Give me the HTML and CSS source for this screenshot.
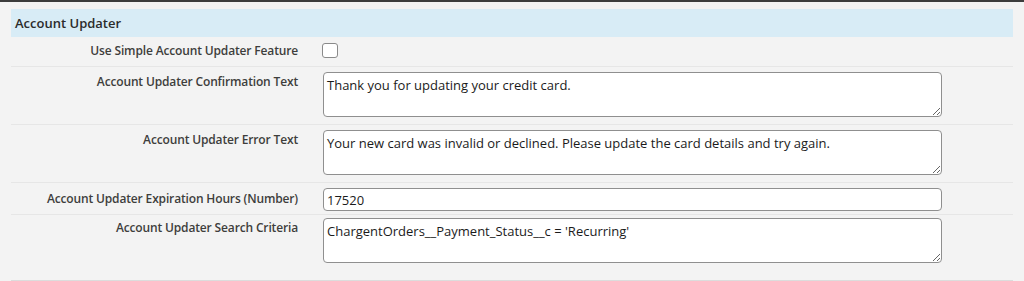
FILE: index.html
```html
<!DOCTYPE html>
<html lang="en">
<head>
  <meta charset="UTF-8" />
  <meta name="viewport" content="width=device-width, initial-scale=1.0" />
  <title>Account Updater</title>
  <link rel="stylesheet" href="styles.css">
</head>
<body>
  <div class="section">
    <h3 class="section-title">Account Updater</h3>

    <div class="row row-check">
      <label class="field-label" for="simple">Use Simple Account Updater Feature</label>
      <div class="field"><input type="checkbox" id="simple" class="check" /></div>
    </div>

    <div class="row">
      <label class="field-label" for="confirm">Account Updater Confirmation Text</label>
      <div class="field"><textarea id="confirm" class="text-box">Thank you for updating your credit card.</textarea></div>
    </div>

    <div class="row">
      <label class="field-label" for="error">Account Updater Error Text</label>
      <div class="field"><textarea id="error" class="text-box">Your new card was invalid or declined. Please update the card details and try again.</textarea></div>
    </div>

    <div class="row row-input">
      <label class="field-label" for="hours">Account Updater Expiration Hours (Number)</label>
      <div class="field"><input type="text" id="hours" class="text-input" value="17520" /></div>
    </div>

    <div class="row row-last">
      <label class="field-label" for="criteria">Account Updater Search Criteria</label>
      <div class="field"><textarea id="criteria" class="text-box">ChargentOrders__Payment_Status__c = 'Recurring'</textarea></div>
    </div>
  </div>
</body>
</html>
```

FILE: styles.css
```css
html, body {
  margin: 0;
  height: 100%;
}
body {
  font-family: "Open Sans", Arial, sans-serif;
  background: #f3f3f3;
  border-top: 2px solid #3c3c3c;
  box-sizing: border-box;
  padding: 7px 11px 0;
}
.section {
  width: 1002px;
  border-bottom: 1px solid #dcdcdc;
}
.section-title {
  margin: 0;
  height: 28px;
  line-height: 28px;
  padding-left: 4px;
  background: #d8ecf6;
  font-size: 13px;
  font-weight: 600;
  color: #2b2b2b;
}
.row {
  display: grid;
  grid-template-columns: 312px 619px;
  padding: 5px 0 7px;
  border-bottom: 1px solid #e6e6e6;
}
.row-check {
  padding: 6px 0 8px;
}
.row-input {
  padding: 5px 0 3px;
}
.row-last {
  border-bottom: none;
  padding: 3px 0 17px;
}
.field-label {
  text-align: right;
  padding-right: 25px;
  padding-top: 3px;
  font-size: 12px;
  line-height: 14px;
  letter-spacing: -0.15px;
  font-weight: 600;
  color: #3e3e3c;
}
.row-check .field-label {
  padding-top: 1px;
}
.row-input .field-label {
  padding-top: 4px;
}
.field {
  display: flex;
}
.check {
  appearance: none;
  margin: 0 0 0 -1px;
  width: 16px;
  height: 15px;
  border: 1px solid #8a8a8a;
  border-radius: 3px;
  background: #fff;
}
.text-box, .text-input {
  width: 100%;
  box-sizing: border-box;
  margin: 0;
  border: 1px solid #8f8f8f;
  border-radius: 4px;
  background: #fff;
  font-family: "Open Sans", Arial, sans-serif;
  font-size: 13px;
  color: #1b1b1b;
  padding: 4px 3px;
}
.text-box {
  height: 45px;
  resize: vertical;
  line-height: 17px;
}
.text-input {
  height: 23px;
  padding: 2px 3px;
}
```
